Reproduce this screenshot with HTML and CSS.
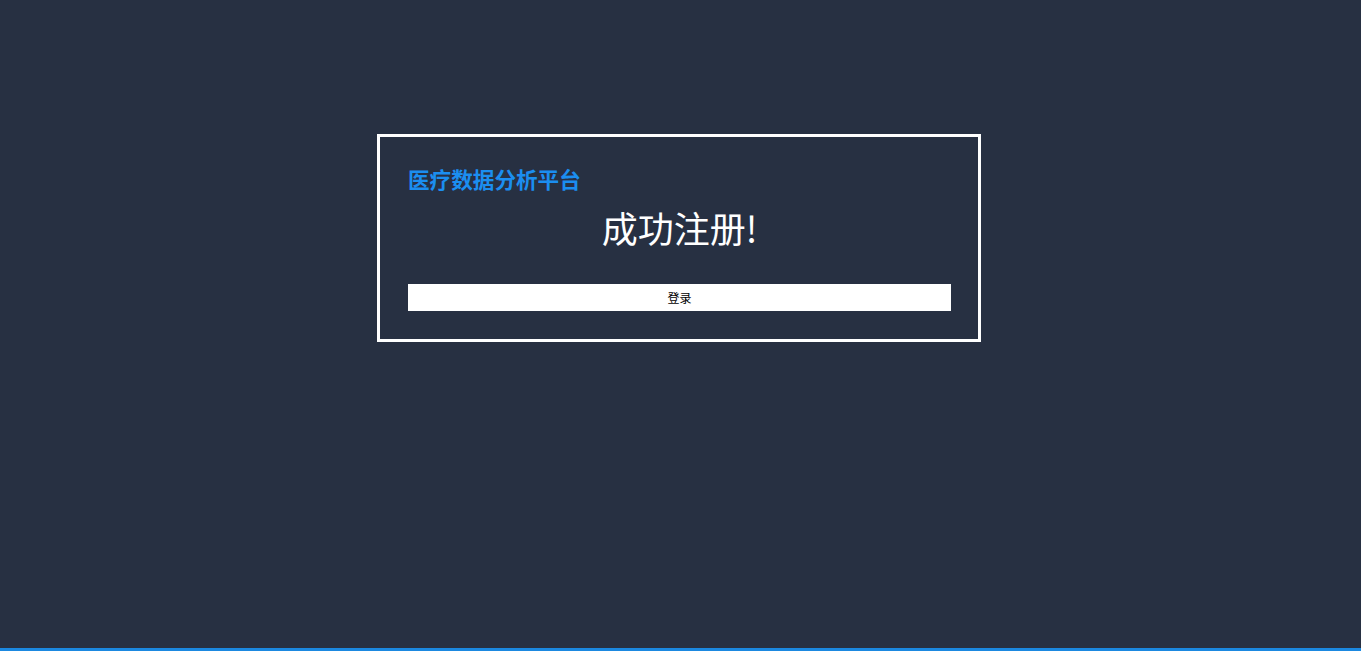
FILE: index.html
```html
<!DOCTYPE html>
<html lang="zh">
<head>
<meta charset="utf-8">
<title>成功注册</title>
<link rel="stylesheet" href="styles.css">
</head>
<body>
<div class="page">
  <div class="card">
    <div class="brand">医疗数据分析平台</div>
    <h1 class="msg">成功注册!</h1>
    <button class="btn" type="button">登录</button>
  </div>
</div>
<div class="bottom-bar"></div>
</body>
</html>
```
FILE: styles.css
```css
html, body {
  margin: 0;
  padding: 0;
  height: 100%;
}
body {
  background: #273042;
  font-family: "Noto Sans CJK SC", "Noto Sans", sans-serif;
  overflow: hidden;
}
.page {
  display: flex;
  justify-content: center;
  padding-top: 134px;
  padding-right: 3px;
}
.card {
  box-sizing: border-box;
  width: 604px;
  border: 3px solid #ffffff;
  padding: 28px 27px 28px 28px;
  display: flex;
  flex-direction: column;
}
.brand {
  color: #1b8ef0;
  font-size: 21.6px;
  font-weight: 700;
  line-height: 28px;
  height: 28px;
}
.msg {
  margin: 10px 0 0 0;
  color: #ffffff;
  font-size: 36px;
  font-weight: 400;
  line-height: 48px;
  text-align: center;
}
.btn {
  margin-top: 33px;
  height: 27px;
  border: none;
  background: #ffffff;
  color: #000000;
  font-family: "Noto Sans CJK SC", "Noto Sans", sans-serif;
  font-size: 12px;
  padding: 0;
  width: 100%;
}
.bottom-bar {
  position: fixed;
  left: 0;
  right: 0;
  bottom: 0;
  height: 3px;
  background: #1b88e0;
}
```
